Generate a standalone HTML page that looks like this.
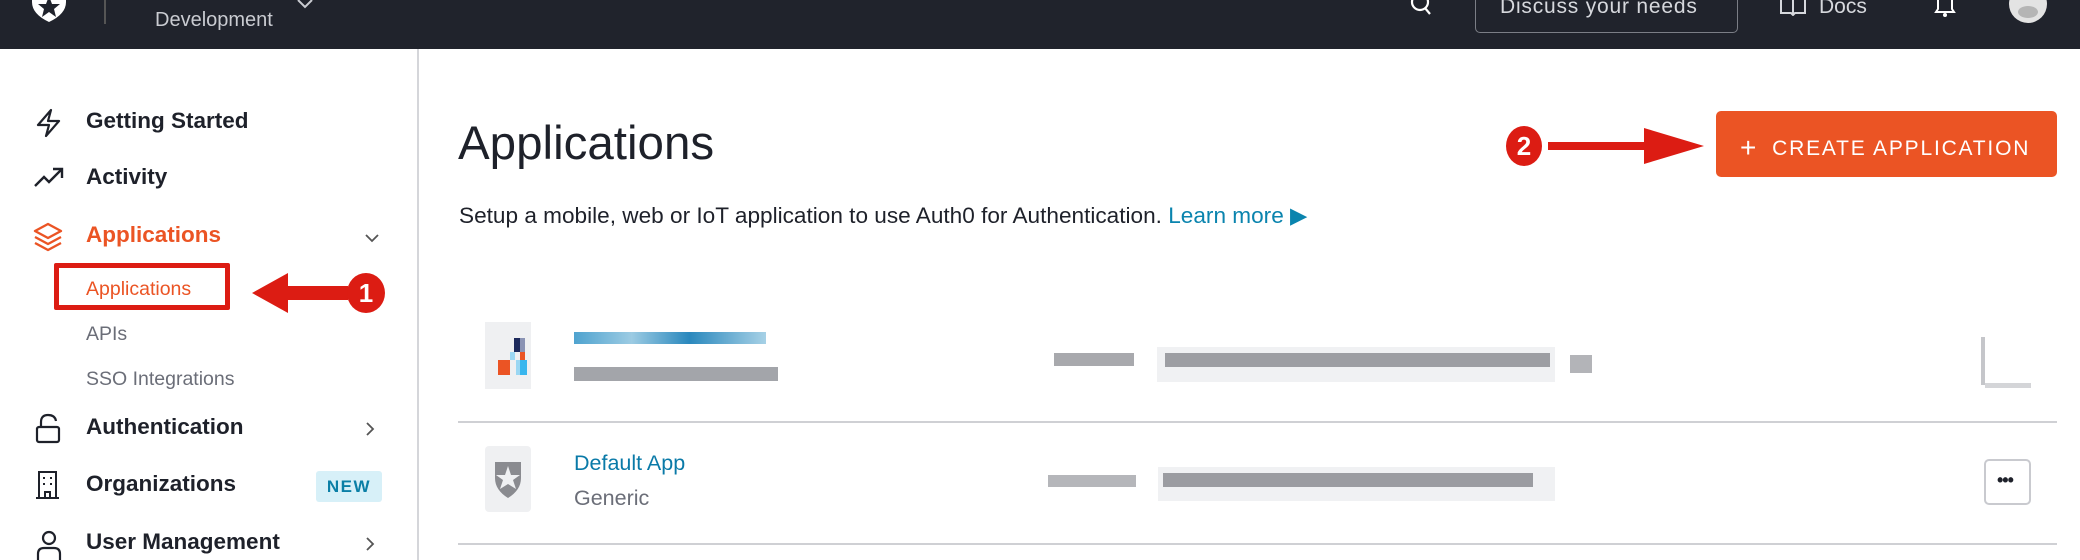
<!DOCTYPE html>
<html><head><meta charset="utf-8"><style>
*{box-sizing:border-box;margin:0;padding:0}
body{width:2080px;height:560px;overflow:hidden;background:#fff;font-family:"Liberation Sans",sans-serif;position:relative;color:#1e212a}
.a{position:absolute;white-space:nowrap}
.top{position:absolute;left:0;top:0;width:2080px;height:49px;background:#20232c}
.nav{font-weight:bold;font-size:22.5px;color:#1e212a}
.sub{font-size:19.5px;color:#6b6e78}
.blk{position:absolute;background:#bfc1c6}
</style></head><body>
<div class="top"></div>
<svg class="a" style="left:28px;top:-8px" width="42" height="30" viewBox="0 0 42 30"><path d="M4 0 L38 0 L38 10 Q38 22 21 30 Q4 22 4 10Z" fill="#fff"/><path d="M21 4 L24 12 L32 12 L26 17 L28 25 L21 20 L14 25 L16 17 L10 12 L18 12Z" fill="#20232c"/></svg>
<div class="a" style="left:104px;top:0;width:2px;height:24px;background:#555"></div>
<div class="a" style="left:155px;top:9px;font-size:20px;color:#c9cbd1">Development</div>
<svg class="a" style="left:296px;top:0" width="18" height="10"><path d="M2 0 L9 7 L16 0" stroke="#c9cbd1" stroke-width="2" fill="none"/></svg>
<svg class="a" style="left:1410px;top:0" width="24" height="16"><circle cx="10" cy="2" r="8" stroke="#fff" stroke-width="2.2" fill="none"/><path d="M15 8 L20 14" stroke="#fff" stroke-width="2.2"/></svg>
<div class="a" style="left:1475px;top:-10px;width:263px;height:43px;border:1.5px solid #7b7e86;border-radius:5px"></div>
<div class="a" style="left:1500px;top:-5px;font-size:21px;color:#d6d8dd;letter-spacing:0.8px">Discuss your needs</div>
<svg class="a" style="left:1779px;top:0" width="28" height="16"><path d="M2 0 V13 H12 L14 15 L16 13 H26 V0 M14 0 V14" stroke="#d6d8dd" stroke-width="2" fill="none"/></svg>
<div class="a" style="left:1819px;top:-5px;font-size:21px;color:#d6d8dd">Docs</div>
<svg class="a" style="left:1933px;top:0" width="24" height="18"><path d="M5 0 V9 L3 12 H21 L19 9 V0" stroke="#fff" stroke-width="2" fill="none"/><circle cx="12" cy="15" r="2" fill="#fff"/></svg>
<svg class="a" style="left:2008px;top:-16px" width="40" height="40"><circle cx="20" cy="20" r="19" fill="#e3e3e3"/><ellipse cx="20" cy="28" rx="10" ry="6" fill="#b5b5b5"/></svg>

<div class="a" style="left:417px;top:49px;width:2px;height:511px;background:#d5d6da"></div>

<svg class="a" style="left:34px;top:108px" width="30" height="30" viewBox="0 0 30 30"><path d="M17 2 L4 17 H15 L12 28 L25 13 H14 Z" stroke="#1e212a" stroke-width="2.2" fill="none" stroke-linejoin="round"/></svg>
<div class="a nav" style="left:86px;top:108px">Getting Started</div>
<svg class="a" style="left:33px;top:166px" width="32" height="22"><path d="M2 20 L11 11 L16 16 L28 4 M20 3 H29 V12" stroke="#1e212a" stroke-width="2.4" fill="none"/></svg>
<div class="a nav" style="left:86px;top:164px">Activity</div>
<svg class="a" style="left:33px;top:222px" width="30" height="30"><path d="M15 2 L28 9 L15 16 L2 9 Z M2 15 L15 22 L28 15 M2 21 L15 28 L28 21" stroke="#eb5424" stroke-width="2.4" fill="none" stroke-linejoin="round"/></svg>
<div class="a nav" style="left:86px;top:222px;color:#eb5424">Applications</div>
<svg class="a" style="left:364px;top:232px" width="16" height="12"><path d="M2 3 L8 9 L14 3" stroke="#555" stroke-width="1.8" fill="none"/></svg>
<div class="a" style="left:54px;top:263px;width:176px;height:47px;border:5px solid #dc1c13;border-radius:2px"></div>
<div class="a sub" style="left:86px;top:278px;color:#eb5424">Applications</div>
<svg class="a" style="left:248px;top:270px" width="140" height="46"><path d="M4 23 L40 3 V16 H100 V30 H40 V43 Z" fill="#dc1c13"/><ellipse cx="118" cy="23" rx="19" ry="20" fill="#dc1c13"/><text x="118" y="32" text-anchor="middle" font-family="Liberation Sans" font-weight="bold" font-size="26" fill="#fff">1</text></svg>
<div class="a sub" style="left:86px;top:323px">APIs</div>
<div class="a sub" style="left:86px;top:368px">SSO Integrations</div>
<svg class="a" style="left:34px;top:413px" width="28" height="32"><path d="M7 14 V9 Q7 2 14 2 Q21 2 22 8" stroke="#1e212a" stroke-width="2.2" fill="none"/><rect x="3" y="14" width="22" height="15" rx="2" stroke="#1e212a" stroke-width="2.2" fill="none"/></svg>
<div class="a nav" style="left:86px;top:414px">Authentication</div>
<svg class="a" style="left:364px;top:420px" width="12" height="18"><path d="M3 3 L9 9 L3 15" stroke="#555" stroke-width="1.8" fill="none"/></svg>
<svg class="a" style="left:36px;top:470px" width="24" height="30"><path d="M3 28 V2 H20 V28 M0 28 H23 M9 28 V22 H14 V28" stroke="#1e212a" stroke-width="2" fill="none"/><rect x="7" y="7" width="2" height="2" fill="#1e212a"/><rect x="14" y="7" width="2" height="2" fill="#1e212a"/><rect x="7" y="13" width="2" height="2" fill="#1e212a"/><rect x="14" y="13" width="2" height="2" fill="#1e212a"/></svg>
<div class="a nav" style="left:86px;top:471px">Organizations</div>
<div class="a" style="left:316px;top:471px;width:66px;height:31px;background:#d7f0f8;border-radius:3px;color:#0b7fa6;font-weight:bold;font-size:17px;letter-spacing:1.5px;text-align:center;line-height:31px">NEW</div>
<svg class="a" style="left:36px;top:530px" width="26" height="30"><circle cx="13" cy="8" r="6" stroke="#1e212a" stroke-width="2.2" fill="none"/><path d="M2 30 V24 Q2 18 8 18 H18 Q24 18 24 24 V30" stroke="#1e212a" stroke-width="2.2" fill="none"/></svg>
<div class="a nav" style="left:86px;top:529px">User Management</div>
<svg class="a" style="left:364px;top:535px" width="12" height="18"><path d="M3 3 L9 9 L3 15" stroke="#555" stroke-width="1.8" fill="none"/></svg>

<div class="a" style="left:458px;top:116px;font-size:47.5px;color:#1e212a">Applications</div>
<div class="a" style="left:459px;top:203px;font-size:22.6px;color:#1e212a">Setup a mobile, web or IoT application to use Auth0 for Authentication. <span style="color:#0a84ae">Learn more ▶</span></div>
<svg class="a" style="left:1504px;top:124px" width="206" height="44"><ellipse cx="20" cy="22" rx="18" ry="20" fill="#dc1c13"/><text x="20" y="31" text-anchor="middle" font-family="Liberation Sans" font-weight="bold" font-size="26" fill="#fff">2</text><path d="M44 18 H140 V4 L200 22 L140 40 V26 H44 Z" fill="#dc1c13"/></svg>
<div class="a" style="left:1716px;top:111px;width:341px;height:66px;background:#eb5424;border-radius:5px"></div>
<div class="a" style="left:1740px;top:130px;font-size:21px;color:#fff;letter-spacing:1.8px"><span style="font-size:28px;position:relative;top:2px;margin-right:14px">+</span>CREATE APPLICATION</div>

<!-- row 1 -->
<div class="a" style="left:485px;top:322px;width:46px;height:67px;background:#eff0f2"></div>
<div class="blk" style="left:514px;top:338px;width:6px;height:14px;background:#1d2a5c"></div>
<div class="blk" style="left:520px;top:338px;width:5px;height:14px;background:#8a93b4"></div>
<div class="blk" style="left:520px;top:352px;width:5px;height:8px;background:#eb5424"></div>
<div class="blk" style="left:510px;top:352px;width:5px;height:8px;background:#9bd7f3"></div>
<div class="blk" style="left:498px;top:360px;width:12px;height:15px;background:#eb5424"></div>
<div class="blk" style="left:516px;top:360px;width:4px;height:15px;background:#9bd7f3"></div>
<div class="blk" style="left:520px;top:360px;width:7px;height:15px;background:#38b6ee"></div>
<div class="blk" style="left:574px;top:332px;width:192px;height:12px;background:linear-gradient(90deg,#4fa3cf,#9ccbe3 30%,#2a88bd 60%,#a7d1e6)"></div>
<div class="blk" style="left:574px;top:367px;width:204px;height:14px;background:#a3a5aa"></div>
<div class="blk" style="left:1054px;top:353px;width:80px;height:13px;background:#a8a9ad"></div>
<div class="a" style="left:1157px;top:347px;width:398px;height:35px;background:#f0f1f3"></div>
<div class="blk" style="left:1165px;top:353px;width:385px;height:14px;background:#9d9ea3"></div>
<div class="blk" style="left:1570px;top:355px;width:22px;height:18px;background:#b3b4b8"></div>
<div class="blk" style="left:1981px;top:337px;width:4px;height:48px;background:#c5c6ca"></div>
<div class="blk" style="left:1985px;top:383px;width:46px;height:5px;background:#d4d5d8"></div>
<div class="a" style="left:458px;top:421px;width:1599px;height:2px;background:#cfd0d4"></div>
<!-- row 2 -->
<div class="a" style="left:485px;top:446px;width:46px;height:66px;background:#eff0f2;border-radius:4px"></div>
<svg class="a" style="left:491px;top:458px" width="34" height="42" viewBox="0 0 34 42"><path d="M4 4 L30 4 L30 20 Q30 32 17 40 Q4 32 4 20Z" fill="#8a8b90"/><path d="M17 8 L20 17 L29 17 L22 22 L25 31 L17 26 L9 31 L12 22 L5 17 L14 17Z" fill="#eff0f2"/></svg>
<div class="a" style="left:574px;top:451px;font-size:21.5px;color:#0a7aa8">Default App</div>
<div class="a" style="left:574px;top:486px;font-size:21.5px;color:#6b6e78">Generic</div>
<div class="blk" style="left:1048px;top:475px;width:88px;height:12px;background:#b5b6ba"></div>
<div class="a" style="left:1158px;top:467px;width:397px;height:34px;background:#f0f1f3"></div>
<div class="blk" style="left:1163px;top:473px;width:370px;height:14px;background:#9b9ca1"></div>
<div class="a" style="left:1984px;top:459px;width:47px;height:46px;border:2px solid #c9cacf;border-radius:5px"></div>
<div class="a" style="left:1997px;top:470px;font-size:18px;font-weight:bold;color:#1e212a;letter-spacing:-1px">•••</div>
<div class="a" style="left:458px;top:543px;width:1599px;height:2px;background:#cfd0d4"></div>
</body></html>
